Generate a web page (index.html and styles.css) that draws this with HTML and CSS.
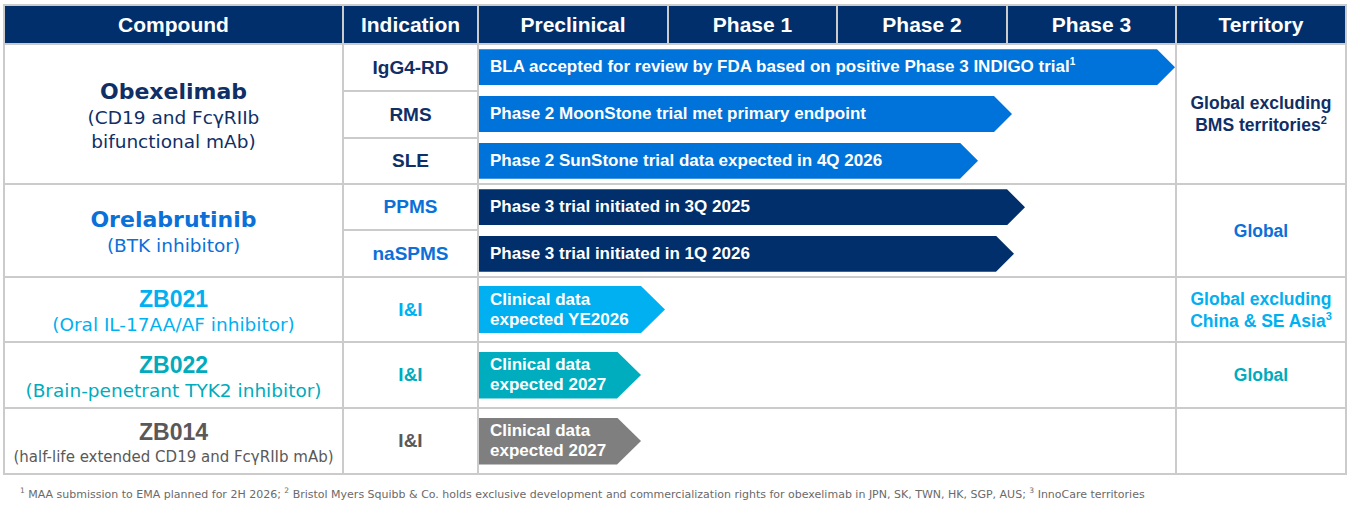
FILE: index.html
```html
<!DOCTYPE html>
<html lang="en">
<head>
<meta charset="utf-8">
<title>Pipeline</title>
<link rel="stylesheet" href="styles.css">
</head>
<body>
<div class="pipeline">
  <div class="hd">Compound</div>
  <div class="hd">Indication</div>
  <div class="hd">Preclinical</div>
  <div class="hd">Phase 1</div>
  <div class="hd">Phase 2</div>
  <div class="hd">Phase 3</div>
  <div class="hd">Territory</div>

  <!-- Obexelimab -->
  <div class="cell c-cmp rs3 navy">
    <div class="name geo">Obexelimab</div>
    <div class="sub">(CD19 and FcγRIIb<br>bifunctional mAb)</div>
  </div>
  <div class="cell c-ind ind navy">IgG4-RD</div>
  <div class="cell c-ph rs3 phase">
    <div class="slot"><div class="arrow one blue" style="width:696px"><span>BLA accepted for review by FDA based on positive Phase 3 INDIGO trial<sup>1</sup></span></div></div>
    <div class="slot"><div class="arrow one blue" style="width:533px"><span>Phase 2 MoonStone trial met primary endpoint</span></div></div>
    <div class="slot"><div class="arrow one blue" style="width:499px"><span>Phase 2 SunStone trial data expected in 4Q 2026</span></div></div>
  </div>
  <div class="cell c-ter rs3 terr navy"><span>Global excluding<br>BMS territories<sup>2</sup></span></div>
  <div class="cell c-ind ind navy">RMS</div>
  <div class="cell c-ind ind navy">SLE</div>

  <!-- Orelabrutinib -->
  <div class="cell c-cmp rs2 blue-t">
    <div class="name geo">Orelabrutinib</div>
    <div class="sub">(BTK inhibitor)</div>
  </div>
  <div class="cell c-ind ind blue-t">PPMS</div>
  <div class="cell c-ph rs2 phase">
    <div class="slot"><div class="arrow one navy-bg" style="width:546px"><span>Phase 3 trial initiated in 3Q 2025</span></div></div>
    <div class="slot"><div class="arrow one navy-bg" style="width:535px"><span>Phase 3 trial initiated in 1Q 2026</span></div></div>
  </div>
  <div class="cell c-ter rs2 terr blue-t"><span>Global</span></div>
  <div class="cell c-ind ind blue-t">naSPMS</div>

  <!-- ZB021 -->
  <div class="cell c-cmp sky-t">
    <div class="name cond">ZB021</div>
    <div class="sub">(Oral IL-17AA/AF inhibitor)</div>
  </div>
  <div class="cell c-ind ind sky-t">I&amp;I</div>
  <div class="cell c-ph phase">
    <div class="slot"><div class="arrow two sky" style="width:186px"><span>Clinical data<br>expected YE2026</span></div></div>
  </div>
  <div class="cell c-ter terr sky-t"><span>Global excluding<br>China &amp; SE Asia<sup>3</sup></span></div>

  <!-- ZB022 -->
  <div class="cell c-cmp teal-t">
    <div class="name cond">ZB022</div>
    <div class="sub">(Brain-penetrant TYK2 inhibitor)</div>
  </div>
  <div class="cell c-ind ind teal-t">I&amp;I</div>
  <div class="cell c-ph phase">
    <div class="slot"><div class="arrow two teal" style="width:162px"><span>Clinical data<br>expected 2027</span></div></div>
  </div>
  <div class="cell c-ter terr teal-t"><span>Global</span></div>

  <!-- ZB014 -->
  <div class="cell c-cmp grey-t">
    <div class="name cond">ZB014</div>
    <div class="sub small">(half-life extended CD19 and FcγRIIb mAb)</div>
  </div>
  <div class="cell c-ind ind grey-t">I&amp;I</div>
  <div class="cell c-ph phase">
    <div class="slot"><div class="arrow two grey" style="width:162px"><span>Clinical data<br>expected 2027</span></div></div>
  </div>
  <div class="cell c-ter terr"></div>
</div>

<p class="foot"><sup>1</sup> MAA submission to EMA planned for 2H 2026; <sup>2</sup> Bristol Myers Squibb &amp; Co. holds exclusive development and commercialization rights for obexelimab in JPN, SK, TWN, HK, SGP, AUS; <sup>3</sup> InnoCare territories</p>
</body>
</html>
```

FILE: styles.css
```css
html, body {
  margin: 0;
  background: #ffffff;
}

body {
  padding: 4px 0 0 3px;
  font-family: "Liberation Sans", Arial, sans-serif;
}

.pipeline {
  display: grid;
  box-sizing: border-box;
  width: 1344px;
  grid-template-columns: 337px 133px 188px 167px 168px 167px 168px;
  grid-template-rows: 37px 45px 45px 44px 44px 45px 63px 64px 64px;
  gap: 2px;
  padding: 2px;
  background: #cbcbcb;
}

.hd {
  background: #002f6c;
  color: #ffffff;
  font-weight: bold;
  font-size: 21px;
  display: flex;
  align-items: center;
  justify-content: center;
}

.cell {
  background: #ffffff;
  display: flex;
  flex-direction: column;
  align-items: center;
  justify-content: center;
  text-align: center;
}

.c-cmp { grid-column: 1; padding-top: 3px; }
.c-ind { grid-column: 2; }
.c-ph { grid-column: 3 / span 4; }
.c-ter { grid-column: 7; }
.rs2 { grid-row: span 2; }
.rs3 { grid-row: span 3; }

.name {
  font-weight: bold;
  line-height: 28px;
}

.name.geo {
  font-family: "DejaVu Sans", sans-serif;
  font-size: 22px;
}

.name.cond {
  font-family: "Liberation Sans", Arial, sans-serif;
  font-size: 23px;
}

.sub {
  font-family: "DejaVu Sans", sans-serif;
  font-size: 18.5px;
  line-height: 24px;
  font-weight: normal;
}

.sub.small {
  font-size: 15px;
  line-height: 22px;
}

.ind {
  font-weight: bold;
  font-size: 19px;
}

.terr {
  font-weight: bold;
  font-size: 17.5px;
  line-height: 22px;
}

.terr sup {
  font-size: 11px;
  line-height: 0;
}

.phase {
  align-items: stretch;
  justify-content: stretch;
  gap: 2px;
}

.slot {
  flex: 1;
  display: flex;
  align-items: center;
}

.arrow {
  box-sizing: border-box;
  color: #ffffff;
  font-weight: bold;
  font-size: 17px;
  text-align: left;
  display: flex;
  align-items: center;
  padding-left: 11px;
  white-space: nowrap;
}

.arrow.one {
  height: 36px;
  clip-path: polygon(0 0, calc(100% - 18px) 0, 100% 50%, calc(100% - 18px) 100%, 0 100%);
}

.arrow.two {
  height: 47px;
  line-height: 20px;
  clip-path: polygon(0 0, calc(100% - 24px) 0, 100% 50%, calc(100% - 24px) 100%, 0 100%);
}

.arrow sup {
  font-size: 10px;
  line-height: 0;
}

.navy { color: #0f2f66; }
.blue-t { color: #0b70d8; }
.sky-t { color: #00b0f0; }
.teal-t { color: #00abbd; }
.grey-t { color: #595959; }

.blue { background: #0073da; }
.navy-bg { background: #002f6c; }
.sky { background: #00b0f0; }
.teal { background: #00adbf; }
.grey { background: #7f7f7f; }

.foot {
  margin: 13px 0 0 17px;
  font-family: "DejaVu Sans", sans-serif;
  font-size: 11px;
  color: #6a6a6a;
  white-space: nowrap;
}

.foot sup {
  font-size: 7.5px;
  line-height: 0;
}
```
